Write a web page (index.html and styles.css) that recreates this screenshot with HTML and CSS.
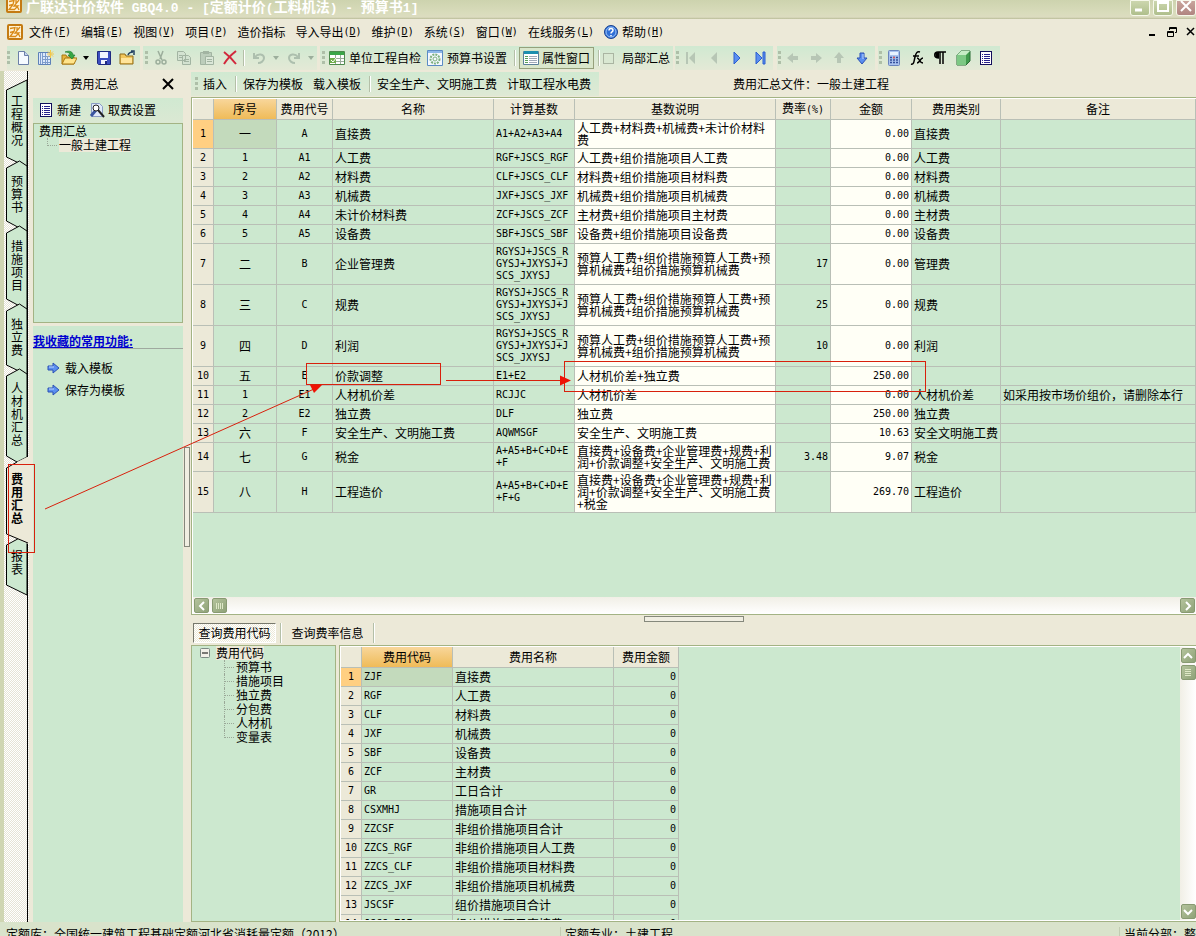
FILE: index.html
```html
<!DOCTYPE html>
<html lang="zh-CN">
<head>
<meta charset="utf-8">
<title>广联达计价软件 GBQ4.0</title>
<link rel="stylesheet" href="styles.css">
</head>
<body>
<svg class="defs" aria-hidden="true">
  <defs>
    <symbol id="app" viewBox="0 0 16 16"><rect x="1" y="1" width="14" height="14" rx="1" fill="#fff3d6" stroke="#c47a12" stroke-width="2"/><path d="M3 4.500l5-1-1 4-4 1M7 7.500l-4 5h5M13 3L8 9h4l-4 4M11 9l2 4M10 3v4" stroke="#d98a17" stroke-width="1.300" fill="none"/></symbol>
    <symbol id="list" viewBox="0 0 16 16"><rect x="2.500" y="1.500" width="11" height="13" fill="#fff" stroke="#10105c"/><path d="M4 4.500h1M6 4.500h6M4 6.500h1M6 6.500h6M4 8.500h1M6 8.500h6M4 10.500h1M6 10.500h6M4 12.500h1M6 12.500h6" stroke="#24248c"/></symbol>
    <symbol id="barrow" viewBox="0 0 16 16"><path d="M3 6h5V3l6 5-6 5v-3H3z" fill="#5b8ff0" stroke="#2b51b5"/><path d="M4 7h5" stroke="#bcd6ff"/></symbol>
    <symbol id="garrow" viewBox="0 0 16 16"><path d="M3 6h5V3l6 5-6 5v-3H3z" fill="#b7c6b5"/></symbol>
    <symbol id="undo" viewBox="0 0 16 16"><path d="M3 3v5h5M4 7c3-4 9-3 9 1 0 3-3 5-6 5" fill="none" stroke="#adbfae" stroke-width="2"/></symbol>
  </defs>
</svg>

<header class="titlebar">
  <svg class="i16"><use href="#app"/></svg>
  <h1>广联达计价软件<span> GBQ4.0 - [</span>定额计价<span>(</span>工料机法<span>) - </span>预算书<span>1]</span></h1>
  <div class="winbtns">
    <button aria-label="最小化"><svg viewBox="0 0 20 16"><path d="M5 10h7" stroke="#fff" stroke-width="3"/></svg></button>
    <button aria-label="最大化"><svg viewBox="0 0 20 16"><path d="M5 1h10v10H5zM5 3h10" stroke="#fff" stroke-width="2" fill="none"/></svg></button>
    <button class="close" aria-label="关闭"><svg viewBox="0 0 20 16"><path d="M5 1l10 10M15 1L5 11" stroke="#fff" stroke-width="2"/></svg></button>
  </div>
</header>

<nav class="menubar">
  <svg class="i16"><use href="#app"/></svg>
  <button>文件<span>(<u>F</u>)</span></button>
  <button>编辑<span>(<u>E</u>)</span></button>
  <button>视图<span>(<u>V</u>)</span></button>
  <button>项目<span>(<u>P</u>)</span></button>
  <button>造价指标</button>
  <button>导入导出<span>(<u>D</u>)</span></button>
  <button>维护<span>(<u>D</u>)</span></button>
  <button>系统<span>(<u>S</u>)</span></button>
  <button>窗口<span>(<u>W</u>)</span></button>
  <button>在线服务<span>(<u>L</u>)</span></button>
  <button><svg viewBox="0 0 14 14"><circle cx="7" cy="7" r="6.500" fill="#2f6fd6" stroke="#1b428f"/><circle cx="7" cy="7" r="5" fill="none" stroke="#9cc4f8"/><path d="M5 5.500c0-3 4-2.500 4-.3C9 7 7 6.800 7 8.500M7 10v1.300" stroke="#fff" stroke-width="1.500" fill="none"/></svg>帮助<span>(<u>H</u>)</span></button>
  <div class="mdi">
    <button aria-label="最小化窗口"><svg viewBox="0 0 12 12"><path d="M1 9h6" stroke="#000" stroke-width="2"/></svg></button>
    <button aria-label="还原窗口"><svg viewBox="0 0 12 12"><path d="M3.500 4V1.500h7v5H9M3 2.500h8M1.500 5.500h6v5h-6zM1 6.500h7" stroke="#000" fill="none"/></svg></button>
    <button aria-label="关闭窗口"><svg viewBox="0 0 12 12"><path d="M3 2l7 7M10 2L3 9" stroke="#000" stroke-width="1.500"/></svg></button>
  </div>
</nav>

<div class="toolbar">
  <div class="group g1">
    <i class="grip"></i>
    <button aria-label="新建"><svg viewBox="0 0 16 16"><path d="M3.500 1.500h6l4 4v9h-10z" fill="#f6fbff" stroke="#6b7fa8"/><path d="M9.500 1.500v4h4" fill="#c4d6ee" stroke="#6b7fa8"/></svg></button>
    <button aria-label="新建项目"><svg viewBox="0 0 16 16"><path d="M.5 2.500h12v12H.5z" fill="#dce9fb" stroke="#5e82b8"/><path d="M2.500 3v11M4.500 3v11M7.500 3v11M9.500 6v8M5 6.500h7M5 9.500h7M5 12.500h7" stroke="#7d9ccc"/><path d="M12.500 0v8M9 4h7M10 1.500l5 5M15 1.500l-5 5" stroke="#f3c84b"/></svg></button>
    <button aria-label="打开"><svg viewBox="0 0 16 16"><path d="M1 14V5h4l1 2h7v7z" fill="#e8b43c" stroke="#a87812"/><path d="M1 14l3-6h12l-3 6z" fill="#ffe48a" stroke="#a87812"/><path d="M4 2c5-2 8 0 8 3h2l-3 4-4-4h2c0-2-2-3-5-3z" fill="#36a845" stroke="#14752a" stroke-width=".6"/></svg></button>
    <button class="drop" aria-label="打开选项"><svg viewBox="0 0 8 8"><path d="M1 2h6L4 6z"/></svg></button>
    <button aria-label="保存"><svg viewBox="0 0 16 16"><path d="M1.500 1.500h13v13h-12l-1-1z" fill="#3c4fc0" stroke="#1d2a80"/><path d="M4 2h8v6H4zM5 10h6v4H5z" fill="#f2f5ff"/><path d="M9 11h2v3H9z" fill="#1d2a80"/></svg></button>
    <button aria-label="关闭文件"><svg viewBox="0 0 16 16"><path d="M1 14V4h5l1 2h7v8z" fill="#f2c75c" stroke="#8f6a18"/><path d="M2 8h11v5H2z" fill="#ffe49a"/><path d="M9 5c1-3 3-3 5-3M12 1h3v4" stroke="#234263" fill="none" stroke-width="1.500"/></svg></button>
  </div>
  <div class="group g2">
    <i class="grip"></i>
    <button aria-label="剪切"><svg viewBox="0 0 16 16"><path d="M5 1l4 9M10 1L7 9" stroke="#9cae9c" stroke-width="1.500"/><circle cx="5" cy="12" r="2" fill="none" stroke="#9cae9c" stroke-width="1.500"/><circle cx="11" cy="12" r="2" fill="none" stroke="#9cae9c" stroke-width="1.500"/></svg></button>
    <button aria-label="复制"><svg viewBox="0 0 16 16"><path d="M1.500 1.500h6l2 2v7h-8zM6.500 5.500h6l2 2v7h-8z" fill="#d3e2d1" stroke="#a2b4a2"/><path d="M8 9.500h5M8 11.500h5M3 5.500h3M3 7.500h3" stroke="#a2b4a2"/></svg></button>
    <button aria-label="粘贴"><svg viewBox="0 0 16 16"><path d="M1.500 2.500h11v12h-11z" fill="#bccdbb" stroke="#a2b4a2"/><path d="M4 1h6v3H4z" fill="#a2b4a2"/><path d="M6.500 6.500h8v8h-8z" fill="#dbe7d8" stroke="#a2b4a2"/><path d="M8 9.500h5M8 11.500h5" stroke="#a2b4a2"/></svg></button>
    <button aria-label="删除"><svg viewBox="0 0 16 16"><path d="M2 2c4 3 8 7 12 12M14 1C9 5 5 9 2 14" stroke="#d2283c" stroke-width="2" fill="none"/></svg></button>
    <i class="sep"></i>
    <button aria-label="撤销"><svg viewBox="0 0 16 16"><use href="#undo"/></svg></button>
    <button class="drop" aria-label="撤销选项"><svg viewBox="0 0 8 8"><path d="M1 2h6L4 6z" fill="#9cae9c"/></svg></button>
    <button aria-label="重做"><svg viewBox="0 0 16 16"><use href="#undo" transform="matrix(-1 0 0 1 16 0)"/></svg></button>
    <button class="drop" aria-label="重做选项"><svg viewBox="0 0 8 8"><path d="M1 2h6L4 6z" fill="#9cae9c"/></svg></button>
  </div>
  <div class="group g3">
    <i class="grip"></i>
    <button class="text"><svg viewBox="0 0 16 16"><path d="M.5 1.500h15v13H.5z" fill="#fff" stroke="#4d8a4d"/><path d="M1 2h14v3H1z" fill="#3aa648"/><path d="M1 8.500h14M1 11.500h14M6.500 5v9M11.500 5v9" stroke="#9aac9a"/><path d="M1 8h6v5H1z" fill="#6fae4d"/><path d="M2 10l2 2 3-4" stroke="#fff" fill="none"/></svg>单位工程自检</button>
    <button class="text"><svg viewBox="0 0 16 16"><path d="M.5.5h15v15H.5z" fill="#f3f8ff" stroke="#5b8bc4"/><path d="M1 1h14v2H1z" fill="#8db8e8"/><circle cx="8" cy="9" r="4.500" fill="none" stroke="#7db07d" stroke-width="2" stroke-dasharray="2 1"/><circle cx="8" cy="9" r="2" fill="none" stroke="#7db07d"/></svg>预算书设置</button>
    <i class="sep"></i>
    <button class="text active"><svg viewBox="0 0 16 16"><path d="M.5 1.500h15v13H.5z" fill="#fff" stroke="#5b7f9a"/><path d="M1 1h14v3H1z" fill="#1d8fae"/><path d="M2 6.500h3M2 8.500h3M2 10.500h3M2 12.500h3" stroke="#58a058"/><path d="M6 6.500h8M6 8.500h8M6 10.500h8M6 12.500h8" stroke="#a0a8b8"/></svg>属性窗口</button>
    <i class="sep"></i>
    <label class="check"><input type="checkbox">局部汇总</label>
  </div>
  <div class="group g4">
    <i class="grip"></i>
    <button aria-label="第一条"><svg viewBox="0 0 16 16"><path d="M3 2h2v12H3zM12 2v12L6 8z" fill="#b7c6b5"/></svg></button>
    <button aria-label="上一条"><svg viewBox="0 0 16 16"><path d="M11 2v12L5 8z" fill="#b7c6b5"/></svg></button>
    <button aria-label="下一条"><svg viewBox="0 0 16 16"><path d="M5 2v12l6-6z" fill="#5b8ff0" stroke="#2b5fd0"/></svg></button>
    <button aria-label="最后一条"><svg viewBox="0 0 16 16"><path d="M4 2v12l6-6zM11 2h2v12h-2z" fill="#5b8ff0" stroke="#2b5fd0"/></svg></button>
  </div>
  <div class="group g5">
    <i class="grip"></i>
    <button aria-label="左移"><svg viewBox="0 0 16 16"><use href="#garrow" transform="rotate(180 8 8)"/></svg></button>
    <button aria-label="右移"><svg viewBox="0 0 16 16"><use href="#garrow"/></svg></button>
    <button aria-label="上移"><svg viewBox="0 0 16 16"><use href="#garrow" transform="rotate(-90 8 8)"/></svg></button>
    <button aria-label="下移"><svg viewBox="0 0 16 16"><use href="#barrow" transform="rotate(90 8 8)"/></svg></button>
  </div>
  <div class="group g6">
    <i class="grip"></i>
    <button aria-label="计算器"><svg viewBox="0 0 16 16"><rect x="2.500" y=".5" width="11" height="15" rx="1" fill="#a9c2ee" stroke="#6a84bc"/><path d="M4 2h8v3H4z" fill="#e8f2ff"/><path d="M4 7.500h8M4 10h8M4 12.500h8" stroke="#34509c" stroke-width="1.500" stroke-dasharray="2 1"/><path d="M7 7.500h2" stroke="#d55" stroke-width="1.500"/></svg></button>
    <button aria-label="函数"><svg viewBox="0 0 16 16"><path d="M2 14c3 1 3-3 4-7s2-6 5-5M4 6h6M8 8c3 0 2 5 6 5M14 8c-3 0-3 5-6 5" stroke="#000" stroke-width="1.500" fill="none"/></svg></button>
    <button aria-label="段落标记"><svg viewBox="0 0 16 16"><path d="M7 8C1 8 2 2 6 2h8M8 2v12M11 2v12" stroke="#000" stroke-width="1.500" fill="none"/><path d="M7 2v6C2 8 2 2 7 2z"/></svg></button>
    <button aria-label="三维"><svg viewBox="0 0 16 16"><path d="M2 5l4-4h9v10l-4 4H2z" fill="#3f9a4c" stroke="#286c34"/><path d="M2 5h9v10H2z" fill="#7cc884"/><path d="M2 5l4-4h9l-4 4z" fill="#c5ecc5"/></svg></button>
    <button aria-label="列表"><svg><use href="#list"/></svg></button>
  </div>
</div>

<div class="work">
  <nav class="vtabs">
    <svg class="outline" viewBox="0 0 25 536" preserveAspectRatio="xMinYMin" aria-hidden="true">
      <g fill="#cce8cf" stroke="#000">
        <path d="M23 9L2.500 19v67L23 96z"/>
        <path d="M23 161L2.500 150V97l13-7 7.500 5z"/>
        <path d="M23 239L2.500 228v-66l13-7 7.500 5z"/>
        <path d="M23 304L2.500 294v-54l13-7 7.500 5z"/>
        <path d="M23 386l-10 5-10.500-6v-80l13-7 7.500 5z"/>
        <path d="M23 524L2.500 514v-40l13-7 7.500 4z"/>
      </g>
      <path d="M25 386h-2l-10 5-10.500 6v66L24 473h1z" fill="#ece9d8"/>
      <path d="M13 391l-10.500 6v66L24 472" fill="none" stroke="#000"/>
    </svg>
    <button>工程概况</button>
    <button class="h65">预算书</button>
    <button class="h78">措施项目</button>
    <button class="h65">独立费</button>
    <button class="h90">人材机汇总</button>
    <button class="h78 on">费用汇总</button>
    <button class="h51">报表</button>
  </nav>

  <aside class="side">
    <div class="sidehead"><h2>费用汇总</h2><button aria-label="关闭面板"><svg viewBox="0 0 12 12"><path d="M1 1l10 10M11 1L1 11" stroke="#000" stroke-width="2"/></svg></button></div>
    <div class="sidetools">
      <button><svg class="i16"><use href="#list"/></svg>新建</button>
      <button><svg class="i16" viewBox="0 0 16 16"><path d="M2.500 1.500h8l3 3v10h-11z" fill="#dfe9fa" stroke="#8a9cc4"/><path d="M2 14l5-6" stroke="#3a56a0" stroke-width="3"/><circle cx="7" cy="6" r="3" fill="#fff" stroke="#222"/><path d="M9 8l6 7" stroke="#222" stroke-width="2"/></svg>取费设置</button>
    </div>
    <div class="sidetree">
      <p>费用汇总</p>
      <ul class="tree"><li><span class="hl">一般土建工程</span></li></ul>
    </div>
    <div class="fav">
      <h3><a href="#fav">我收藏的常用功能:</a></h3>
      <button><svg class="i16"><use href="#barrow"/></svg>载入模板</button>
      <button><svg class="i16"><use href="#barrow"/></svg>保存为模板</button>
    </div>
  </aside>
  <div class="vsplit"><i></i></div>

  <main>
    <div class="subbar">
      <div class="subtools">
        <i class="grip"></i>
        <button>插入</button><i class="sep"></i><button>保存为模板</button><button>载入模板</button><i class="sep"></i><button>安全生产、文明施工费</button><button>计取工程水电费</button>
      </div>
      <p>费用汇总文件：一般土建工程</p>
    </div>

    <section class="gridbox">
      <div class="gridview">
      <table class="grid">
        <colgroup><col class="w21"><col class="w63"><col class="w56"><col class="w161"><col class="w81"><col class="w201"><col class="w55"><col class="w81"><col class="w89"><col></colgroup>
        <thead><tr><th></th><th class="sel">序号</th><th>费用代号</th><th>名称</th><th>计算基数</th><th>基数说明</th><th>费率<span class="m">(%)</span></th><th>金额</th><th>费用类别</th><th>备注</th></tr></thead>
        <tbody>
          <tr class="r2"><th class="cur">1</th><td class="c cur">一</td><td class="c m">A</td><td>直接费</td><td class="m">A1+A2+A3+A4</td><td class="w">人工费+材料费+机械费+未计价材料费</td><td class="n"></td><td class="n w">0.00</td><td>直接费</td><td></td></tr>
          <tr><th>2</th><td class="c m">1</td><td class="c m">A1</td><td>人工费</td><td class="m">RGF+JSCS_RGF</td><td class="w">人工费+组价措施项目人工费</td><td class="n"></td><td class="n w">0.00</td><td>人工费</td><td></td></tr>
          <tr><th>3</th><td class="c m">2</td><td class="c m">A2</td><td>材料费</td><td class="m">CLF+JSCS_CLF</td><td class="w">材料费+组价措施项目材料费</td><td class="n"></td><td class="n w">0.00</td><td>材料费</td><td></td></tr>
          <tr><th>4</th><td class="c m">3</td><td class="c m">A3</td><td>机械费</td><td class="m">JXF+JSCS_JXF</td><td class="w">机械费+组价措施项目机械费</td><td class="n"></td><td class="n w">0.00</td><td>机械费</td><td></td></tr>
          <tr><th>5</th><td class="c m">4</td><td class="c m">A4</td><td>未计价材料费</td><td class="m">ZCF+JSCS_ZCF</td><td class="w">主材费+组价措施项目主材费</td><td class="n"></td><td class="n w">0.00</td><td>主材费</td><td></td></tr>
          <tr><th>6</th><td class="c m">5</td><td class="c m">A5</td><td>设备费</td><td class="m">SBF+JSCS_SBF</td><td class="w">设备费+组价措施项目设备费</td><td class="n"></td><td class="n w">0.00</td><td>设备费</td><td></td></tr>
          <tr class="r3"><th>7</th><td class="c">二</td><td class="c m">B</td><td>企业管理费</td><td class="m">RGYSJ+JSCS_RGYSJ+JXYSJ+JSCS_JXYSJ</td><td class="w">预算人工费+组价措施预算人工费+预算机械费+组价措施预算机械费</td><td class="n">17</td><td class="n w">0.00</td><td>管理费</td><td></td></tr>
          <tr class="r3"><th>8</th><td class="c">三</td><td class="c m">C</td><td>规费</td><td class="m">RGYSJ+JSCS_RGYSJ+JXYSJ+JSCS_JXYSJ</td><td class="w">预算人工费+组价措施预算人工费+预算机械费+组价措施预算机械费</td><td class="n">25</td><td class="n w">0.00</td><td>规费</td><td></td></tr>
          <tr class="r3"><th>9</th><td class="c">四</td><td class="c m">D</td><td>利润</td><td class="m">RGYSJ+JSCS_RGYSJ+JXYSJ+JSCS_JXYSJ</td><td class="w">预算人工费+组价措施预算人工费+预算机械费+组价措施预算机械费</td><td class="n">10</td><td class="n w">0.00</td><td>利润</td><td></td></tr>
          <tr><th>10</th><td class="c">五</td><td class="c m">E</td><td>价款调整</td><td class="m">E1+E2</td><td class="w">人材机价差+独立费</td><td class="n"></td><td class="n w">250.00</td><td></td><td></td></tr>
          <tr><th>11</th><td class="c m">1</td><td class="c m">E1</td><td>人材机价差</td><td class="m">RCJJC</td><td class="w">人材机价差</td><td class="n"></td><td class="n w">0.00</td><td>人材机价差</td><td>如采用按市场价组价，请删除本行</td></tr>
          <tr><th>12</th><td class="c m">2</td><td class="c m">E2</td><td>独立费</td><td class="m">DLF</td><td class="w">独立费</td><td class="n"></td><td class="n w">250.00</td><td>独立费</td><td></td></tr>
          <tr><th>13</th><td class="c">六</td><td class="c m">F</td><td>安全生产、文明施工费</td><td class="m">AQWMSGF</td><td class="w">安全生产、文明施工费</td><td class="n"></td><td class="n w">10.63</td><td>安全文明施工费</td><td></td></tr>
          <tr class="r2"><th>14</th><td class="c">七</td><td class="c m">G</td><td>税金</td><td class="m">A+A5+B+C+D+E+F</td><td class="w">直接费+设备费+企业管理费+规费+利润+价款调整+安全生产、文明施工费</td><td class="n">3.48</td><td class="n w">9.07</td><td>税金</td><td></td></tr>
          <tr class="r3"><th>15</th><td class="c">八</td><td class="c m">H</td><td>工程造价</td><td class="m">A+A5+B+C+D+E+F+G</td><td class="w">直接费+设备费+企业管理费+规费+利润+价款调整+安全生产、文明施工费+税金</td><td class="n"></td><td class="n w">269.70</td><td>工程造价</td><td></td></tr>
        </tbody>
      </table>
      </div>
      <div class="hscroll">
        <button aria-label="向左滚动"><svg viewBox="0 0 14 14"><path d="M9 3L5 7l4 4" stroke="#fff" stroke-width="2" fill="none"/></svg></button>
        <button aria-label="水平滑块"><svg viewBox="0 0 14 14"><path d="M3.500 4v6M5.500 4v6M7.500 4v6M9.500 4v6" stroke="#dfe8c8"/></svg></button>
        <button class="end" aria-label="向右滚动"><svg viewBox="0 0 14 14"><path d="M5 3l4 4-4 4" stroke="#fff" stroke-width="2" fill="none"/></svg></button>
      </div>
    </section>

    <div class="hsplit"><i></i></div>
    <div class="tabs"><button class="on">查询费用代码</button><i class="sep"></i><button>查询费率信息</button><i class="sep"></i></div>

    <section class="lower">
      <div class="codetree">
        <p><svg viewBox="0 0 10 10"><rect x=".5" y=".5" width="9" height="9" rx="1" fill="#f2f0e8" stroke="#7c8a84"/><path d="M2 5h6" stroke="#000"/></svg><span class="hl">费用代码</span></p>
        <ul class="tree"><li>预算书</li><li>措施项目</li><li>独立费</li><li>分包费</li><li>人材机</li><li>变量表</li></ul>
      </div>
      <div class="codebox">
        <div class="codeview">
        <table class="grid codes">
          <colgroup><col class="w21"><col class="w91"><col class="w161"><col class="w65"></colgroup>
          <thead><tr><th></th><th class="sel">费用代码</th><th>费用名称</th><th>费用金额</th></tr></thead>
          <tbody>
            <tr><th class="cur">1</th><td class="m cur">ZJF</td><td>直接费</td><td class="n">0</td></tr>
            <tr><th>2</th><td class="m">RGF</td><td>人工费</td><td class="n">0</td></tr>
            <tr><th>3</th><td class="m">CLF</td><td>材料费</td><td class="n">0</td></tr>
            <tr><th>4</th><td class="m">JXF</td><td>机械费</td><td class="n">0</td></tr>
            <tr><th>5</th><td class="m">SBF</td><td>设备费</td><td class="n">0</td></tr>
            <tr><th>6</th><td class="m">ZCF</td><td>主材费</td><td class="n">0</td></tr>
            <tr><th>7</th><td class="m">GR</td><td>工日合计</td><td class="n">0</td></tr>
            <tr><th>8</th><td class="m">CSXMHJ</td><td>措施项目合计</td><td class="n">0</td></tr>
            <tr><th>9</th><td class="m">ZZCSF</td><td>非组价措施项目合计</td><td class="n">0</td></tr>
            <tr><th>10</th><td class="m">ZZCS_RGF</td><td>非组价措施项目人工费</td><td class="n">0</td></tr>
            <tr><th>11</th><td class="m">ZZCS_CLF</td><td>非组价措施项目材料费</td><td class="n">0</td></tr>
            <tr><th>12</th><td class="m">ZZCS_JXF</td><td>非组价措施项目机械费</td><td class="n">0</td></tr>
            <tr><th>13</th><td class="m">JSCSF</td><td>组价措施项目合计</td><td class="n">0</td></tr>
            <tr><th>14</th><td class="m">JSCS_ZJF</td><td>组价措施项目直接费</td><td class="n">0</td></tr>
          </tbody>
        </table>
        </div>
        <div class="vscroll">
          <button aria-label="向上滚动"><svg viewBox="0 0 14 14"><path d="M3 9l4-4 4 4" stroke="#fff" stroke-width="2" fill="none"/></svg></button>
          <button aria-label="垂直滑块"><svg viewBox="0 0 14 14"><path d="M4 3.500h6M4 5.500h6M4 7.500h6M4 9.500h6" stroke="#dfe8c8"/></svg></button>
          <button class="end" aria-label="向下滚动"><svg viewBox="0 0 14 14"><path d="M3 5l4 4 4-4" stroke="#fff" stroke-width="2" fill="none"/></svg></button>
        </div>
      </div>
    </section>
  </main>
</div>

<footer class="status"><span class="s1">定额库：全国统一建筑工程基础定额河北省消耗量定额（2012）</span><span class="s2">定额专业：土建工程</span><span class="s3">当前分部：整个项目</span></footer>

<svg class="marks" viewBox="0 0 1196 936" aria-hidden="true">
  <g fill="none" stroke="#d8200c">
    <rect x="8.500" y="464.500" width="26" height="88"/>
    <rect x="306.500" y="363.500" width="134" height="21"/>
    <rect x="564.500" y="361.500" width="361" height="30"/>
    <path d="M45 509L314 389M446 380.500h116"/>
  </g>
  <path d="M322 385l-12 0 4 8zM571 380.500l-11-5v10z" fill="#ee1205"/>
</svg>
</body>
</html>
```
FILE: styles.css
```css
* { box-sizing: border-box; margin: 0; padding: 0; }

html, body { height: 100%; }

body {
  position: relative;
  display: flex;
  flex-direction: column;
  overflow: hidden;
  background: #ece9d8;
  color: #000;
  font: 12px/14px "Noto Sans CJK SC", sans-serif;
}

button {
  display: flex;
  align-items: center;
  justify-content: center;
  border: 0;
  background: none;
  color: inherit;
  font: inherit;
  white-space: nowrap;
}

svg { display: block; flex: none; }
.defs { position: absolute; width: 0; height: 0; }
.i16 { width: 16px; height: 16px; }

/* title bar */
.titlebar {
  display: flex;
  flex: none;
  height: 19px;
  padding-left: 6px;
  gap: 4px;
  overflow: hidden;
  background: linear-gradient(#cdd3ae, #d9dcbc 70%, #dcdcc0 90%, #b9bc98);
}
.titlebar .i16 { margin-top: -3px; }
.titlebar h1 { flex: 1; font-size: 14px; line-height: 12px; color: #fff; white-space: pre; }
.titlebar h1 span { font: bold 13px/12px "Liberation Mono", monospace; }
.winbtns { display: flex; gap: 3px; }
.winbtns button {
  width: 20px;
  height: 16px;
  border: 1px solid #f6f8ea;
  border-radius: 0 0 3px 3px;
  background: linear-gradient(#ccd6ae, #afbf8c);
}
.winbtns .close { background: linear-gradient(#c9a59c, #b08480); }
.winbtns svg { width: 20px; height: 16px; }

/* menu bar */
.menubar { display: flex; flex: none; align-items: center; height: 27px; padding: 0 0 1px 7px; gap: 10px; }
.menubar > .i16 { margin-right: -4px; }
.menubar span { font: 10px/14px "DejaVu Sans Mono", monospace; }
.menubar button > svg:not(:only-child) { width: 14px; height: 14px; margin-right: 4px; }
.mdi { display: flex; gap: 6px; margin-left: auto; }
.mdi svg { width: 12px; height: 12px; }

/* main toolbar */
.toolbar { display: flex; flex: none; height: 25px; padding-left: 7px; }
.group {
  display: flex;
  align-items: center;
  height: 24px;
  background: linear-gradient(#d0e9d1, #e4e9d6);
}
.group button { width: 23px; height: 22px; }
.group button svg { width: 16px; height: 16px; }
.group .drop { width: 12px; }
.group .drop svg { width: 8px; height: 8px; }
.group .text { width: auto; padding: 0 3px; gap: 4px; }
.group .active { width: 75px; border: 1px solid #96a07c; background: #d9e6cb; gap: 3px; }
.g1 { width: 133px; }
.g1 .grip { margin: 0 1px 0 0; }
.g2 { margin-left: 3px; }
.g3 { width: 353px; margin-left: 3px; }
.g4 { width: 98px; margin-left: 2px; }
.g5 { width: 98px; margin-left: 4px; }
.g6 { width: 122px; margin-left: 3px; }
.g4 .grip, .g5 .grip, .g6 .grip { margin: 0 0 0 1px; }
.grip {
  flex: none;
  width: 3px;
  height: 15px;
  margin: 0 1px 0 2px;
  background: repeating-linear-gradient(#aebfa8 0 3px, transparent 3px 5px);
}
.sep {
  flex: none;
  width: 2px;
  height: 16px;
  margin: 0 2px;
  border-left: 1px solid #b4bfa8;
  border-right: 1px solid #fff;
}
.g3 .sep { margin: 0 3px 0 4px; }
.check { display: flex; align-items: center; gap: 8px; }
.check input { appearance: none; width: 11px; height: 11px; border: 1px solid #aab5a2; background: #d9e8d2; }

/* working area */
.work {
  display: flex;
  flex: 1;
  min-height: 0;
  border-left: 4px solid #cfd5b2;
}

.vtabs {
  position: relative;
  display: flex;
  flex: none;
  flex-direction: column;
  width: 25px;
  padding-top: 9px;
  background:
    linear-gradient(#000, #000) 23px 0 / 1px 100% no-repeat,
    repeating-conic-gradient(#fff 0 25%, #e6e3d6 0 50%) 0 0 / 2px 2px;
}
.outline { position: absolute; left: 0; top: 0; width: 25px; height: 536px; }
.vtabs button {
  position: relative;
  flex: none;
  width: 12px;
  height: 82px;
  margin-left: 7px;
  padding-bottom: 3px;
  line-height: 13px;
  white-space: normal;
  word-break: break-all;
}
.vtabs .h51 { height: 51px; }
.vtabs .h65 { height: 65px; }
.vtabs .h78 { height: 78px; }
.vtabs .h90 { height: 90px; }
.vtabs .on { font-weight: bold; }

.side { display: flex; flex: none; flex-direction: column; width: 154px; padding-left: 4px; }
.sidehead { display: flex; align-items: center; height: 26px; margin-bottom: 1px; }
.sidehead h2 { flex: 1; font-size: 12px; font-weight: normal; text-align: center; padding-right: 6px; }
.sidehead button { padding-right: 9px; }
.sidehead svg { width: 12px; height: 12px; }
.sidetools { display: flex; gap: 8px; height: 25px; padding: 0 0 2px 5px; background: linear-gradient(#d0e9d1, #dbe8d3); }
.sidetools button { gap: 3px; }
.sidetree { height: 200px; border: 1px solid #a3b384; background: #cce8cf; }
.sidetree p { padding: 0 5px; }
.sidetree .tree { margin-left: 13px; }
.hl { background: #ece9d8; }
.tree { list-style: none; }
.tree li { display: flex; height: 14px; align-items: flex-start; }
.tree li::before {
  content: "";
  width: 9px;
  height: 14px;
  margin-right: 2px;
  border-left: 1px dotted #9aa898;
  background: repeating-linear-gradient(90deg, #9aa898 0 1px, transparent 1px 2px) 0 7px / 100% 1px no-repeat;
}
.tree li:last-child::before { height: 8px; }
.fav { flex: 1; margin-top: 3px; background: #cce8cf; }
.fav h3 { height: 23px; margin-bottom: 8px; padding-top: 8px; border-bottom: 1px solid #9fa99f; font-size: 12px; }
.fav a { color: #0000d0; }
.fav button { height: 22px; padding: 0 0 1px 12px; gap: 4px; }

.vsplit { display: flex; flex: none; width: 8px; align-items: center; justify-content: center; }
.vsplit i { width: 6px; height: 100px; border: 1px solid #85887c; background: #f0eee2; }

main { display: flex; flex: 1; flex-direction: column; min-width: 0; }
.subbar { display: flex; flex: none; height: 26px; align-items: center; }
.subbar p { margin-left: 134px; }
.subtools { display: flex; align-items: center; height: 24px; width: 408px; padding-left: 2px; background: linear-gradient(#d0e9d1, #dfe9d5); }
.subtools button { margin: 0 5px; }
.subtools .grip { margin-right: 0; }
.subtools .sep { margin: 0 1px 0 3px; }

.gridbox {
  display: flex;
  flex: 517 1 0;
  flex-direction: column;
  min-height: 0;
  padding: 1px 0 0 1px;
  border: 1px solid #a3b384;
  border-right: 0;
  background: #fff;
}
.gridview { flex: 1; min-height: 0; overflow: hidden; background: #cce8cf; }

.grid { width: 100%; border-collapse: separate; border-spacing: 0; table-layout: fixed; line-height: 12px; }
.codes { width: 338px; }
.grid tr { height: 19px; }
.grid thead tr { height: 21px; }
.grid .r2 { height: 29px; }
.grid .r3 { height: 41px; }
.grid th, .grid td {
  height: inherit;
  padding: 0 0 0 2px;
  border-right: 1px solid #b9bfb6;
  border-bottom: 1px solid #b9bfb6;
  font-weight: normal;
  text-align: left;
  vertical-align: middle;
  word-break: break-all;
}
.grid th { padding: 0; background: #ece9d8; text-align: center; }
.grid .sel { background: linear-gradient(#f8d69a, #efbb58); }
.grid tbody th { font: 10px/12px "DejaVu Sans Mono", monospace; }
.grid th.cur { background: #ffcf82; }
.grid td.cur { background: #c3dabc; }
.grid .w { background: #fffff6; }
.grid .c { padding: 0; text-align: center; }
.grid .m { font: 10px/12px "DejaVu Sans Mono", monospace; }
.grid .n { padding-right: 2px; text-align: right; font: 10px/12px "DejaVu Sans Mono", monospace; }
.w21 { width: 21px; }
.w55 { width: 55px; }
.w56 { width: 56px; }
.w63 { width: 63px; }
.w65 { width: 65px; }
.w81 { width: 81px; }
.w89 { width: 89px; }
.w91 { width: 91px; }
.w161 { width: 161px; }
.w201 { width: 201px; }

.hscroll { display: flex; flex: none; align-items: center; gap: 3px; height: 17px; padding: 0 1px; background: linear-gradient(#f1efe6, #fff); }
.vscroll { display: flex; flex: none; flex-direction: column; align-items: center; gap: 2px; width: 16px; padding: 1px 0; background: linear-gradient(90deg, #f1efe6, #fff); }
.hscroll button, .vscroll button { width: 15px; height: 15px; border: 1px solid #889a72; border-radius: 2px; background: linear-gradient(135deg, #b4c39c, #8fa278); }
.hscroll svg, .vscroll svg { width: 14px; height: 14px; }
.hscroll .end { margin-left: auto; }
.vscroll .end { margin-top: auto; }

.hsplit { flex: none; height: 8px; padding-top: 1px; }
.hsplit i { display: block; width: 100px; height: 6px; margin: 0 auto; border: 1px solid #85887c; background: #f0eee2; }
.tabs { display: flex; flex: none; align-items: center; height: 22px; padding: 0 0 2px 2px; }
.tabs button { width: 83px; height: 20px; }
.tabs .on { border: 1px solid; border-color: #77786c #fff #fff #77786c; background: repeating-conic-gradient(#fff 0 25%, #ece9d8 0 50%) 0 0 / 2px 2px; }
.tabs .sep { margin: 0 4px; height: 20px; }

.lower { display: flex; flex: 278 1 0; min-height: 0; gap: 3px; }
.codetree { flex: none; width: 145px; padding: 0 0 0 8px; border: 1px solid #a3b384; background: #cce8cf; }
.codetree p { display: flex; align-items: center; gap: 6px; }
.codetree p svg { width: 10px; height: 10px; }
.codetree .tree { margin-left: 24px; }
.codebox { display: flex; flex: 1; min-width: 0; padding: 1px 0 1px 1px; border: 1px solid #a3b384; border-right: 0; background: #fff; }
.codeview { flex: 1; overflow: hidden; background: #cce8cf; }

.status { display: flex; flex: none; height: 14px; padding: 5px 0 0 6px; overflow: hidden; background: #d9e3cb; white-space: nowrap; }
.status span { flex: none; border-left: 1px solid #c2ccb2; padding-left: 4px; }
.status .s1 { width: 554px; padding: 0; border: 0; }
.status .s2 { flex: 1; }
.status .s3 { width: 77px; }

/* red annotation marks drawn over the window */
.marks { position: absolute; left: 0; top: 0; width: 1196px; height: 936px; pointer-events: none; }
```
